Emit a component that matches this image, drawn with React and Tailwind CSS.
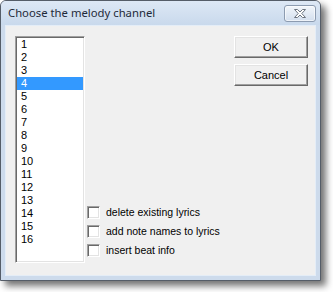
import React from 'react';

const channels = Array.from({ length: 16 }, (_, i) => String(i + 1));

function Checkbox({ label }) {
  return (
    <label className="flex h-[19px] items-center gap-[6px]">
      <span className="box-border h-[13px] w-[13px] border border-t-[#a0a0a0] border-l-[#a0a0a0] border-r-white border-b-white bg-white shadow-[inset_1px_1px_0_#696969,inset_-1px_-1px_0_#e3e3e3]" />
      <span className="text-[10.5px]">{label}</span>
    </label>
  );
}

function Button({ children, className = '' }) {
  return (
    <button
      className={`box-border h-[22px] w-[74px] border border-t-white border-l-white border-r-[#696969] border-b-[#696969] bg-[#f0f0f0] shadow-[inset_-1px_-1px_0_#a0a0a0,inset_1px_1px_0_#e3e3e3] text-center ${className}`}
    >
      {children}
    </button>
  );
}

export default function App() {
  return (
    <div className="h-[292px] w-[333px] bg-white" style={{ fontFamily: '"Liberation Sans", Arial, sans-serif' }}>
      <div className="box-border flex h-[281px] w-[321px] flex-col rounded-t-[6px] border border-[#555d68] bg-[#cddbec] shadow-[5px_5px_7px_rgba(0,0,0,0.55)]">
        {/* title bar */}
        <div className="flex h-[24px] items-center rounded-t-[5px] bg-gradient-to-b from-[#dde8f5] to-[#c9d9ec] pl-[7px] pr-[4px]">
          <span className="flex-1 pt-[1px] text-[11.3px] text-[#1f2a3a]" style={{ fontFamily: '"Noto Sans", sans-serif' }}>
            Choose the melody channel
          </span>
          <div className="flex h-[17px] w-[32px] items-center justify-center rounded-[3px] border border-[#8c9bb0] bg-gradient-to-b from-[#f2f6fb] to-[#d3dfee] shadow-[inset_0_0_0_1px_rgba(255,255,255,0.6)]">
            <svg width="14" height="11" viewBox="0 0 14 11">
              <path
                d="M1.5 1.5 H4.5 L7 4 L9.5 1.5 H12.5 L8.8 5.5 L12.5 9.5 H9.5 L7 7 L4.5 9.5 H1.5 L5.2 5.5 Z"
                fill="#ffffff"
                stroke="#6d7580"
                strokeWidth="1"
                strokeLinejoin="round"
              />
            </svg>
          </div>
        </div>
        {/* client area */}
        <div className="mx-[4px] mb-[4px] flex flex-1 border border-[#e4edf7] bg-[#f0f0f0] pl-[9px] pr-[7px] pt-[10px] text-[11px] text-black">
          <div className="box-border h-[227px] w-[70px] border border-t-[#a0a0a0] border-l-[#a0a0a0] border-r-white border-b-white bg-white shadow-[inset_1px_1px_0_#696969,inset_-1px_-1px_0_#e3e3e3] p-[1px]">
            {channels.map((c) => (
              <div
                key={c}
                className={`h-[13px] pl-[4px] leading-[13px] ${c === '4' ? 'bg-[#3399ff] text-white' : ''}`}
              >
                {c}
              </div>
            ))}
          </div>
          <div className="flex flex-1 flex-col pl-[2px] pt-[167px]">
            <Checkbox label="delete existing lyrics" />
            <Checkbox label="add note names to lyrics" />
            <Checkbox label="insert beat info" />
          </div>
          <div className="flex flex-col gap-[6px]">
            <Button>OK</Button>
            <Button>Cancel</Button>
          </div>
        </div>
      </div>
    </div>
  );
}
